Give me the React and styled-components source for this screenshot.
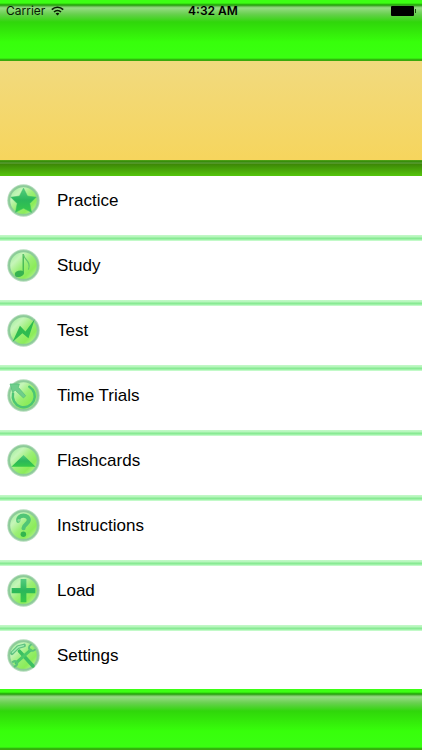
import React from 'react'
import styled, { createGlobalStyle } from 'styled-components'

const STAR = '12,3 14.9,8.8 21.2,9.6 16.6,14.2 17.8,20.6 12,17.6 6.2,20.6 7.4,14.2 2.8,9.6 9.1,8.8'

const items = [
  { label: 'Practice', glyph: <polygon points={STAR} fill='url(#glyph)' stroke='#3bbf66' strokeWidth='.4' strokeLinejoin='round' /> },
  {
    label: 'Study',
    glyph: (
      <g>
        <path d='M11.8 3.6V17.8' stroke='#3cb251' strokeWidth='.9' fill='none' />
        <path d='M12 4C12.4 8 17.8 9 15.6 15' stroke='#62c66f' strokeWidth='.9' fill='none' />
        <ellipse cx='9' cy='18' rx='3.4' ry='2.2' transform='rotate(-18 9 18)' fill='#36b350' />
      </g>
    )
  },
  {
    label: 'Test',
    glyph: <path d='M4 20.4L9.4 8.6L13.4 12.8L20.2 3.6L15.6 17.6L11.2 14Z' fill='#2fbb50' />
  },
  {
    label: 'Time Trials',
    glyph: (
      <g>
        <path d='M16.2 5.6A8 8 0 1 1 4.4 10.6' fill='none' stroke='#4cc574' strokeWidth='1.8' strokeLinecap='round' />
        <path d='M2.2 3.6L9 3.6L8.2 6L13.6 12.2L12 13.8L6 8.2L4 9.6Z' fill='#6fcd8b' stroke='#52c277' strokeWidth='.5' />
      </g>
    )
  },
  { label: 'Flashcards', glyph: <path d='M12 8L20.8 16.6H3.2Z' fill='url(#glyph)' /> },
  {
    label: 'Instructions',
    glyph: (
      <g>
        <path d='M8.2 8.6C7.4 3.6 16.4 3.6 15.8 8.4C15.4 11.2 11.9 11.2 12 14' fill='none' stroke='#51c576' strokeWidth='3' strokeLinecap='round' />
        <circle cx='11.9' cy='18.4' r='2' fill='#33b54e' />
        <circle cx='8.6' cy='8.3' r='1' fill='#87d994' />
      </g>
    )
  },
  { label: 'Load', glyph: <path d='M9.9 3.6H14.1V10.2H20.6V14H14.1V20.6H9.9V14H3.4V10.2H9.9Z' fill='url(#glyph)' /> },
  {
    label: 'Settings',
    glyph: (
      <g fill='none' strokeLinecap='round'>
        <path d='M9 8.8L18.9 19.6' stroke='#3cc062' strokeWidth='2.6' />
        <path d='M3.6 10.4L8 6L12.4 4.7' stroke='#5fc280' strokeWidth='2.7' />
        <path d='M4 9.8L8.2 5.8L12 4.8' stroke='#a5edb0' strokeWidth='1' />
        <path d='M17.1 8.1L6.6 17.4' stroke='#4aca68' strokeWidth='2.2' />
        <path d='M17.4 4.2C14.2 6.2 17 10.3 20.3 7.8' stroke='#59c47a' strokeWidth='1.4' />
        <path d='M4.3 16.6C7.5 14.7 8.6 18.8 5.6 20' stroke='#59c47a' strokeWidth='1.5' />
      </g>
    )
  }
]

const App = () => {
  return (
    <Screen>
      <GlobalStyle />
      <Defs />
      <Header>
        <StatusBar>
          <Carrier>
            Carrier
            <WifiIcon />
          </Carrier>
          <Time>4:32 AM</Time>
          <Battery />
        </StatusBar>
      </Header>
      <Banner />
      <Shelf />
      <Menu>
        {items.map(item => (
          <Item key={item.label}>
            <ItemButton type='button'>
              <Badge glyph={item.glyph} />
              <Label>{item.label}</Label>
            </ItemButton>
          </Item>
        ))}
      </Menu>
      <Footer />
    </Screen>
  )
}

// Gradients shared by all menu badges
const Defs = () => (
  <HiddenSvg aria-hidden='true'>
    <defs>
      <linearGradient id='orb' x1='0' y1='0' x2='1' y2='1'>
        <stop offset='0' stopColor='#8eea92' />
        <stop offset='.28' stopColor='#c6f5b9' />
        <stop offset='.5' stopColor='#9bef76' />
        <stop offset='.72' stopColor='#8bec58' />
        <stop offset='1' stopColor='#c9f6b6' />
      </linearGradient>
      <linearGradient id='glyph' x1='0' y1='0' x2='0' y2='1'>
        <stop offset='0' stopColor='#55cd80' />
        <stop offset='.5' stopColor='#2bb75a' />
        <stop offset='1' stopColor='#36ca48' />
      </linearGradient>
    </defs>
  </HiddenSvg>
)

const Badge = ({ glyph }) => (
  <BadgeSvg viewBox='0 0 24 24' aria-hidden='true'>
    <circle cx='12' cy='12' r='11.8' fill='#b4dcbb' />
    <circle cx='12' cy='12' r='10.4' fill='url(#orb)' stroke='#8ccb98' strokeWidth='1.5' />
    {glyph}
  </BadgeSvg>
)

const WifiIcon = () => (
  <svg width='13' height='10' viewBox='0 0 13 10' fill='none' stroke='#071c03' strokeWidth='1.6' aria-hidden='true'>
    <path d='M.8 3.6C4 .4 9 .4 12.2 3.6' />
    <path d='M3 6C5 4.1 8 4.1 10 6' />
    <path d='M6.5 9.4L4.6 7.5C5.7 6.5 7.3 6.5 8.4 7.5Z' fill='#071c03' stroke='none' />
  </svg>
)

const GlobalStyle = createGlobalStyle`
  body {
    margin: 0;
    background: #fff;
  }
`

const Screen = styled.div`
  display: flex;
  flex-direction: column;
  min-height: 100vh;
  font-family: 'Liberation Sans', Arial, sans-serif;
  color: #000;
`

const HiddenSvg = styled.svg`
  position: absolute;
  width: 0;
  height: 0;
`

const Bar = styled.div`
  box-sizing: border-box;
  height: 61px;
  background: linear-gradient(
    #3dff14 0, #3dff14 3px,
    #209c08 5px, #7fcc6b 7px,
    #96dc84 8px, #68d04f 14px,
    #30d60b 22px, #33e80a 31px,
    #37ff0b 42px, #3aff12 58px,
    #2b9f0a 60px, #47b50e 61px
  );
`

const Header = styled(Bar).attrs({ as: 'header' })``

const Footer = styled(Bar).attrs({ as: 'footer' })``

const StatusBar = styled.div`
  display: grid;
  grid-template-columns: 1fr auto 1fr;
  align-items: center;
  height: 22px;
  padding: 0 6px;
  font-family: Inter, Roboto, sans-serif;
  font-size: 12px;
  line-height: 16px;
`

const Carrier = styled.span`
  display: flex;
  align-items: center;
  gap: 6px;
  color: #071c03;
`

const Time = styled.span`
  font-weight: 600;
  padding-left: 4px;
`

const Battery = styled.span`
  position: relative;
  justify-self: end;
  width: 23px;
  height: 10px;
  margin-right: 2px;
  border-radius: 1px;
  background: #000;

  &::after {
    content: '';
    position: absolute;
    top: 3px;
    left: 24px;
    width: 1px;
    height: 4px;
    background: #174b0b;
  }
`

const Banner = styled.div`
  height: 99px;
  background: linear-gradient(#f1da7f, #f6d55d);
`

const Shelf = styled.div`
  height: 16px;
  background: linear-gradient(#55a51a 0, #2f8605 2px, #69a548 3px, #3c8706 4px, #459c08 8px, #55c50c 16px);
`

const Menu = styled.ul`
  flex: 1;
  margin: 0;
  padding: 0;
  list-style: none;
`

const Item = styled.li`
  padding-bottom: 9px;

  &:not(:last-child) {
    padding-bottom: 0;
  }

  &:not(:last-child)::after {
    content: '';
    display: block;
    height: 6px;
    margin-top: 10px;
    background: linear-gradient(#c4f9c8 0, #b4f6ba 2px, #88e993 3px, #8aeb95 4px, #b4f7bb 5px, #d0fdd5 6px);
  }
`

const ItemButton = styled.button`
  display: flex;
  align-items: center;
  gap: 17px;
  width: 100%;
  height: 49px;
  padding: 0 7px;
  border: 0;
  background: none;
  color: inherit;
  font-family: inherit;
  font-size: 17px;
  line-height: 24px;
  text-align: left;
  cursor: pointer;
`

const Label = styled.span`
  padding-top: 1px;
`

const BadgeSvg = styled.svg`
  flex: none;
  width: 33px;
  height: 33px;
`

export default App
